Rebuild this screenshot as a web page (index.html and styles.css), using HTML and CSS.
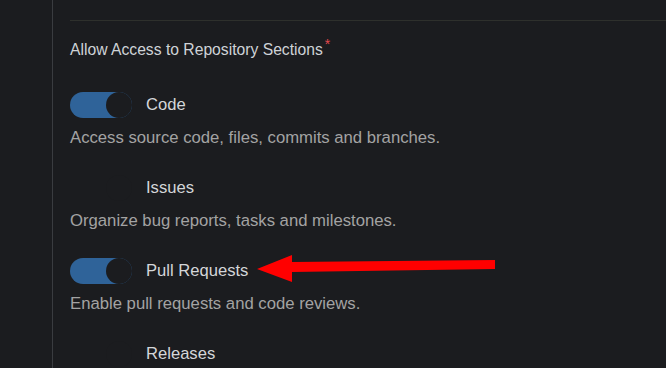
FILE: index.html
```html
<!DOCTYPE html>
<html lang="en">
<head>
  <meta charset="UTF-8">
  <title>Repository Sections</title>
  <link rel="stylesheet" href="styles.css">
</head>
<body>
  <div class="page">
    <div class="sidebar"></div>
    <div class="main">
      <div class="divider"></div>

      <div class="field-label">Allow Access to Repository Sections<span class="required">*</span></div>

      <div class="section">
        <div class="section-head">
          <span class="toggle on"><span class="knob"></span></span>
          <span class="section-name">Code</span>
        </div>
        <div class="section-desc">Access source code, files, commits and branches.</div>
      </div>

      <div class="section">
        <div class="section-head">
          <span class="toggle"><span class="knob"></span></span>
          <span class="section-name">Issues</span>
        </div>
        <div class="section-desc">Organize bug reports, tasks and milestones.</div>
      </div>

      <div class="section">
        <div class="section-head">
          <span class="toggle on"><span class="knob"></span></span>
          <span class="section-name">Pull Requests</span>
        </div>
        <div class="section-desc">Enable pull requests and code reviews.</div>
      </div>

      <div class="section">
        <div class="section-head">
          <span class="toggle"><span class="knob"></span></span>
          <span class="section-name">Releases</span>
        </div>
      </div>
    </div>
  </div>

  <!-- annotation arrow pointing at Pull Requests -->
  <svg class="arrow" width="666" height="368" viewBox="0 0 666 368">
    <polygon points="257,269 292,255 292,262 495,260 495,269 292,272 292,282" fill="#ff0000"/>
  </svg>
</body>
</html>
```

FILE: styles.css
```css
body {
  margin: 0;
  padding: 0;
  background-color: #1b1c1f;
  font-family: 'Liberation Sans', Arial, sans-serif;
  overflow: hidden;
}

.page {
  display: flex;
  height: 100vh;
  overflow: hidden;
}

.sidebar {
  width: 52px;
  flex-shrink: 0;
}

.main {
  flex: 1;
  border-left: 1px solid #3a3c40;
  padding-left: 17px;
}

.divider {
  height: 20px;
  border-bottom: 1px solid #2e302c;
}

.field-label {
  margin-top: 14px;
  font-size: 15.7px;
  line-height: 18px;
  color: #cfd3d7;
}

.required {
  color: #e5484d;
  font-size: 14px;
  vertical-align: 6px;
  margin-left: 2px;
}

.section {
  margin-top: 32px;
  height: 51px;
}

.field-label + .section {
  margin-top: 33px;
}

.section-head {
  display: flex;
  align-items: center;
  height: 26px;
}

.toggle {
  position: relative;
  width: 62px;
  height: 26px;
  border-radius: 13px;
  background-color: transparent;
  flex-shrink: 0;
}

.toggle.on {
  background-color: #2f6399;
}

.toggle .knob {
  position: absolute;
  right: 0;
  top: 0;
  width: 26px;
  height: 26px;
  border-radius: 50%;
  background-color: #1b1c1f;
}

.section-name {
  margin-left: 14px;
  font-size: 16.6px;
  color: #d4d6d9;
}

.section-desc {
  margin-top: 10px;
  font-size: 16.7px;
  line-height: 19px;
  color: #a3a3a3;
}

.arrow {
  position: absolute;
  left: 0;
  top: 0;
  pointer-events: none;
}
```
